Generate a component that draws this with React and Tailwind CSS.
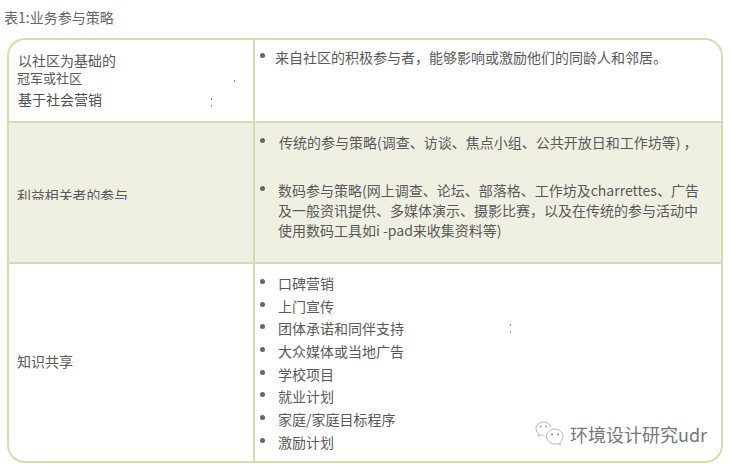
function Bullet({ children, className = "" }) {
  return (
    <li className={"flex items-start " + className}>
      <span className="mt-[6px] mr-[13px] h-[5px] w-[5px] shrink-0 rounded-full bg-[#666666]" />
      <span className="min-w-0">{children}</span>
    </li>
  );
}

const knowledge = [
  "口碑营销",
  "上门宣传",
  "团体承诺和同伴支持",
  "大众媒体或当地广告",
  "学校项目",
  "就业计划",
  "家庭/家庭目标程序",
  "激励计划",
];

export default function App() {
  return (
    <div className="relative h-[467px] w-[730px] overflow-hidden bg-white font-['Noto_Sans_CJK_SC','Liberation_Sans',sans-serif] text-[14px] leading-[20px] text-[#595959]">
      <p className="pl-[4px] pt-[7px] text-[#666666]">表1:业务参与策略</p>
      <div className="ml-[7px] mt-[11px] grid h-[425px] w-[716px] grid-cols-[246px_1fr] grid-rows-[83px_141px_1fr] overflow-hidden rounded-[18px] border-2 border-[#d9dab0]">
        <div className="relative border-b-2 border-r-2 border-[#d9dab0] pl-[8px] pt-[10px]">
          <p className="pl-[1px]">以社区为基础的</p>
          <p className="text-[13px] leading-[16px]">冠军或社区</p>
          <p className="mt-[3px] pl-[1px] text-[#4d4d4d]">基于社会营销</p>
          <span className="absolute left-[225px] top-[40px] h-[2px] w-px bg-[#999999]" />
          <span className="absolute left-[202px] top-[58px] h-[2px] w-px bg-[#777777]" />
          <span className="absolute left-[202px] top-[65px] h-[2px] w-px bg-[#999999]" />
        </div>
        <div className="border-b-2 border-[#d9dab0] pl-[5px] pt-[7px]">
          <ul>
            <Bullet className="[&>span:first-child]:mr-[10px]">来自社区的积极参与者，能够影响或激励他们的同龄人和邻居。</Bullet>
          </ul>
        </div>
        <div className="flex items-start border-b-2 border-r-2 border-[#d9dab0] bg-[#f0f0e2] pl-[8px] pt-[62px]">
          <p className="h-[15px] overflow-hidden text-[13.9px] leading-[20px]">利益相关者的参与</p>
        </div>
        <div className="border-b-2 border-[#d9dab0] bg-[#f0f0e2] pl-[5px] pr-[17px] pt-[9px]">
          <ul>
            <Bullet className="[&>span:first-child]:mr-[14px]">传统的参与策略(调查、访谈、焦点小组、公共开放日和工作坊等) ，</Bullet>
            <Bullet className="mt-[28px]">数码参与策略(网上调查、论坛、部落格、工作坊及charrettes、广告及一般资讯提供、多媒体演示、摄影比赛，以及在传统的参与活动中使用数码工具如i -pad来收集资料等)</Bullet>
          </ul>
        </div>
        <div className="flex items-center border-r-2 border-[#d9dab0] pb-[3px] pl-[8px]">
          <p>知识共享</p>
        </div>
        <div className="relative pl-[5px] pt-[9px]">
          <ul className="flex flex-col gap-[2.7px]">
            {knowledge.map((t) => (
              <Bullet key={t}>{t}</Bullet>
            ))}
          </ul>
          <span className="absolute left-[255px] top-[60px] h-[2px] w-px bg-[#999999]" />
          <span className="absolute left-[255px] top-[67px] h-[2px] w-px bg-[#999999]" />
        </div>
      </div>
      <div className="absolute left-[535px] top-[421px] flex items-center gap-[6px]">
        <svg width="29" height="26" viewBox="0 0 29 26" fill="none" stroke="#b5b5b5" strokeWidth="1">
          <path d="M16 6.500C15 3 12 1 8.500 1C4.500 1 1 4 1 7.500c0 2 1 3.700 2.800 5L3 15l2.800-1.300c1 .3 1.800.5 2.800.5" />
          <path d="M28 15.500C28 11.500 24.500 8 20 8s-8.500 3.500-8.500 7.500S15.500 23 20 23c1 0 2-.2 3-.5l2.500 1.500-.7-2.500C26.800 20.200 28 18 28 15.500z" />
          <circle cx="5.800" cy="5.500" r="0.900" fill="#999999" stroke="none" />
          <circle cx="11" cy="5.500" r="0.900" fill="#999999" stroke="none" />
          <circle cx="17" cy="13.500" r="0.900" fill="#777777" stroke="none" />
          <circle cx="23" cy="13.500" r="0.900" fill="#777777" stroke="none" />
        </svg>
        <span className="text-[18px] leading-[24px] text-[#777777] [text-shadow:0_0_1px_#ffffff,1px_1px_0_#ffffff]">环境设计研究udr</span>
      </div>
    </div>
  );
}
